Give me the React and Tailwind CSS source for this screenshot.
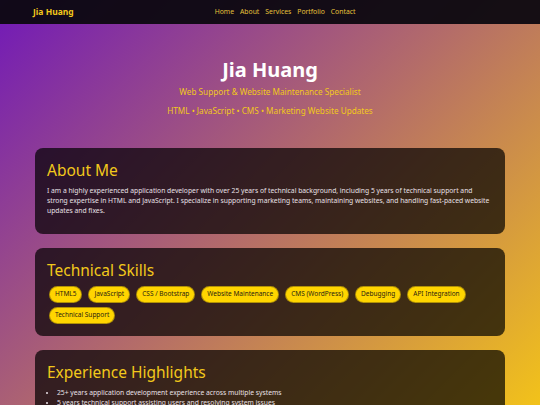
import React from 'react';

const skills = [
  'HTML5',
  'JavaScript',
  'CSS / Bootstrap',
  'Website Maintenance',
  'CMS (WordPress)',
  'Debugging',
  'API Integration',
  'Technical Support',
];

const highlights = [
  '25+ years application development experience across multiple systems',
  '5 years technical support assisting users and resolving system issues',
  'Strong HTML and JavaScript skills for marketing website updates',
  'Fast, reliable turnaround on content and bug fixes',
];

const Card = ({ title, children }) => (
  <section className="rounded-lg bg-black/70 px-3 pt-[11px] pb-[14px]">
    <h2 className="text-[15.5px] leading-[22px] text-[#f2c81b] mb-[5px]">{title}</h2>
    {children}
  </section>
);

const App = () => {
  return (
    <div
      className="min-h-screen bg-fixed bg-[linear-gradient(135deg,#7119b8_0%,#b36b6a_50%,#f2c21a_100%)]"
      style={{ fontFamily: '"Noto Sans", "Open Sans", sans-serif' }}
    >
      <nav className="h-6 bg-[#0c0810]/95 flex items-center px-[33px]">
        <span className="text-[8.5px] font-bold text-[#f2c81b]">Jia Huang</span>
        <ul className="flex gap-[6px] ml-[141px] text-[6.8px] text-[#e6c23a]">
          <li>Home</li>
          <li>About</li>
          <li>Services</li>
          <li>Portfolio</li>
          <li>Contact</li>
        </ul>
      </nav>

      <header className="text-center pt-[33px] pb-[30px]">
        <h1 className="text-[20px] font-bold text-white leading-[26px]">Jia Huang</h1>
        <p className="text-[8.2px] text-[#f2c81b] mt-[3px]">Web Support &amp; Website Maintenance Specialist</p>
        <p className="text-[8.2px] text-[#f2c81b] mt-[7px]">HTML • JavaScript • CMS • Marketing Website Updates</p>
      </header>

      <main className="mx-[35px] flex flex-col gap-[14px] pb-10">
        <Card title="About Me">
          <p className="text-[6.75px] leading-[10px] text-[#e8e0e6] pb-[4px]">
            I am a highly experienced application developer with over 25 years of technical background, including 5 years of technical support and strong expertise in HTML and JavaScript. I specialize in supporting marketing teams, maintaining websites, and handling fast-paced website updates and fixes.
          </p>
        </Card>

        <Card title="Technical Skills">
          <div className="flex flex-wrap gap-x-[6px] gap-y-[4px] px-[2px] -mb-[2px]">
            {skills.map((skill) => (
              <span
                key={skill}
                className="rounded-full bg-[#ffd500] text-[#2a1d10] text-[6.5px] h-[17px] px-[5px] flex items-center border border-[#3a2a10]/40"
              >
                {skill}
              </span>
            ))}
          </div>
        </Card>

        <Card title="Experience Highlights">
          <ul className="list-disc pl-[10px] text-[6.75px] leading-[10px] text-[#e8e0e6]">
            {highlights.map((item) => (
              <li key={item}>{item}</li>
            ))}
          </ul>
        </Card>
      </main>
    </div>
  );
};

export default App;
